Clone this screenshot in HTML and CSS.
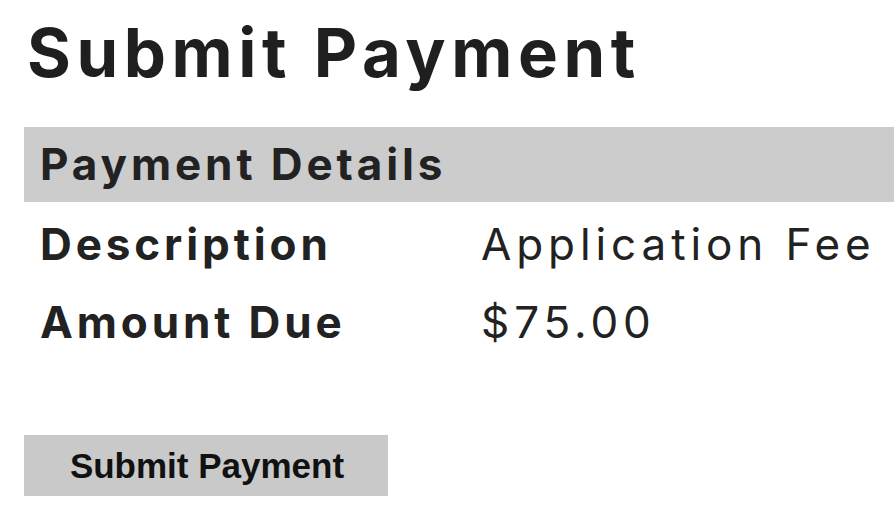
FILE: index.html
```html
<!DOCTYPE html>
<html lang="en">
<head>
<meta charset="utf-8">
<title>Submit Payment</title>
<link rel="stylesheet" href="styles.css">
</head>
<body>
<main class="page">
  <h1 class="title">Submit Payment</h1>
  <section class="details">
    <div class="details-head">Payment Details</div>
    <div class="details-body">
      <div class="row">
        <div class="label">Description</div>
        <div class="value">Application Fee</div>
      </div>
      <div class="row">
        <div class="label">Amount Due</div>
        <div class="value">$75.00</div>
      </div>
    </div>
  </section>
  <button class="submit" type="button">Submit Payment</button>
</main>
</body>
</html>
```
FILE: styles.css
```css
html, body {
  margin: 0;
  padding: 0;
  background: #ffffff;
}

.page {
  padding-left: 24px;
  font-family: Inter, "DejaVu Sans", sans-serif;
  color: #222222;
}

.title {
  margin: 12px 0 34px 0;
  padding-left: 3px;
  font-size: 67px;
  line-height: 81px;
  font-weight: 700;
  letter-spacing: 5.6px;
  color: #1f1f1f;
}

.details {
  font-size: 44px;
  letter-spacing: 3.9px;
}

.details-head {
  background: #cccccc;
  height: 75px;
  line-height: 75px;
  padding-left: 16px;
  font-weight: 700;
  white-space: nowrap;
}

.details-body {
  padding-top: 3px;
}

.row {
  display: grid;
  grid-template-columns: 441px 1fr;
  padding-left: 16px;
  line-height: 78px;
  white-space: nowrap;
}

.label {
  font-weight: 700;
}

.value {
  font-weight: 400;
  letter-spacing: 4.9px;
}

.submit {
  display: block;
  margin-top: 74px;
  width: 364px;
  height: 61px;
  padding: 0 0 0 2px;
  border: none;
  background: #c9c9c9;
  font-family: "Liberation Sans", Arial, sans-serif;
  font-size: 35px;
  font-weight: 700;
  color: #111111;
  text-align: center;
}
```
